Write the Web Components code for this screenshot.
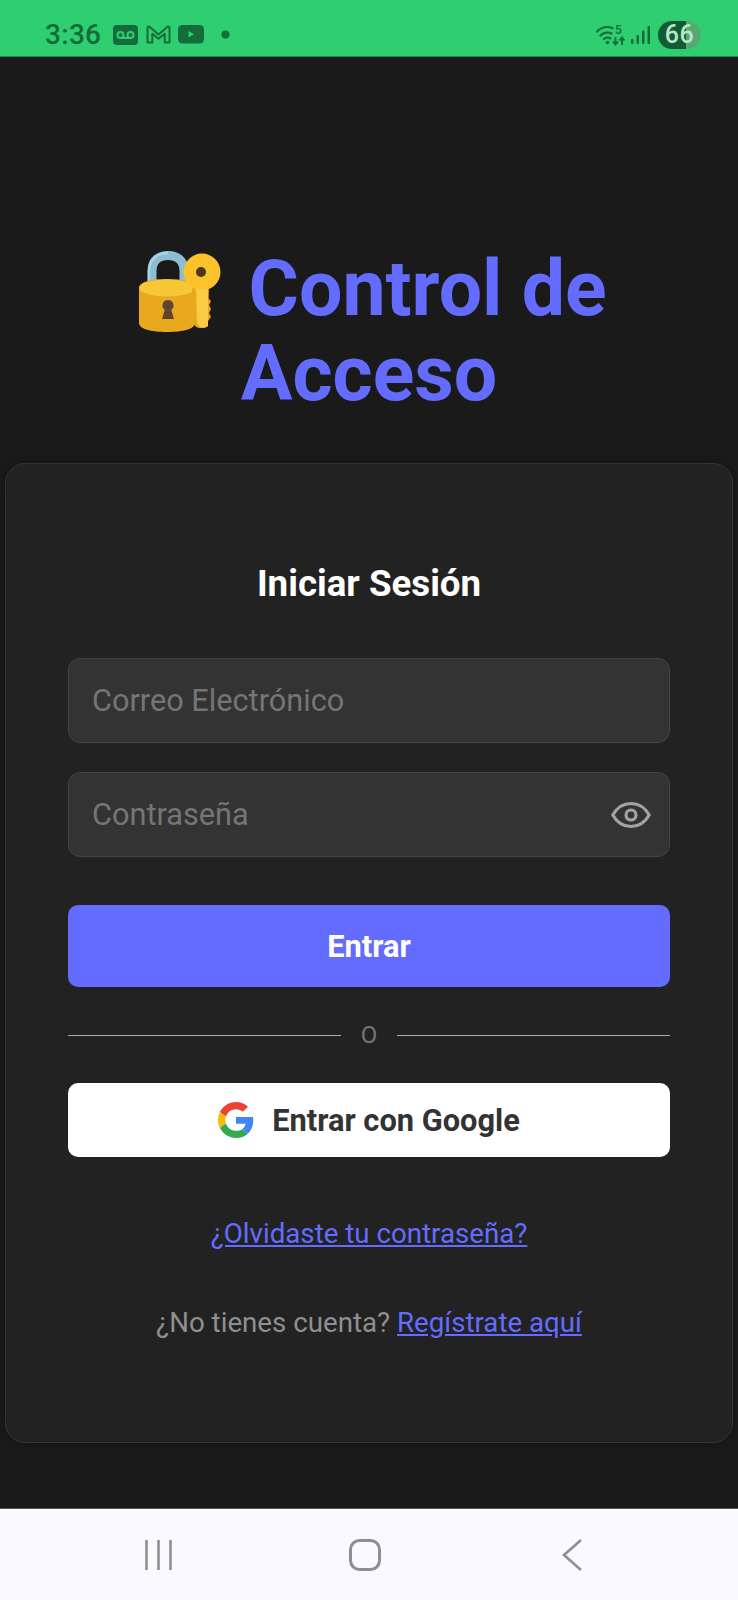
<!DOCTYPE html>
<html lang="es">
<head>
<meta charset="utf-8">
<title>Control de Acceso</title>
<style>
html,body{margin:0;padding:0;background:#1a1a1a;}
body{width:738px;height:1600px;overflow:hidden;font-family:Roboto,"Liberation Sans",sans-serif;}
#app{display:flex;flex-direction:column;height:1600px;}
</style>
</head>
<body>
<div id="app">
  <status-bar></status-bar>
  <login-page>
    <login-field placeholder="Correo Electrónico"></login-field>
    <login-field placeholder="Contraseña" eye></login-field>
  </login-page>
  <nav-bar></nav-bar>
</div>
<script>
class StatusBar extends HTMLElement{
    constructor(){
        super();
        this.attachShadow({ mode: "open" });
        this.shadowRoot.innerHTML = `
        <style>
        :host{display:flex;align-items:center;justify-content:space-between;height:57px;box-sizing:border-box;
            background:#2fce71;border-bottom:1px solid #1e8a4c;padding:13px 37px 0 45px;color:#156b3a;flex:none;}
        .side{display:flex;align-items:center;}
        .time{font:500 28px Roboto,sans-serif;margin-right:12px;letter-spacing:.3px;}
        svg{display:block;}
        .batt{position:relative;width:43px;height:28px;border-radius:14px;background:#55a973;overflow:hidden;margin-left:7px;}
        .batt i{position:absolute;left:0;top:0;bottom:0;width:28px;background:#125c34;}
        .batt b{position:absolute;inset:0;text-align:center;font:500 25px/28px Roboto,sans-serif;color:#b9e6ca;letter-spacing:.5px;}
        </style>
        <div class="side">
            <span class="time">3:36</span>
            <svg width="25" height="20" viewBox="0 0 25 20" style="margin-right:8px"><rect width="25" height="20" rx="4" fill="#156b3a"/><circle cx="7.500" cy="10" r="3" fill="none" stroke="#2fce71" stroke-width="2"/><circle cx="17.500" cy="10" r="3" fill="none" stroke="#2fce71" stroke-width="2"/><path d="M7.500 13h10" stroke="#2fce71" stroke-width="2"/></svg>
            <svg width="25" height="19" viewBox="0 0 25 19" style="margin-right:7px"><path d="M1.500 17.500V3c0-1.300 1.400-1.800 2.300-1l8.700 7.500L21.200 2c.9-.8 2.300-.3 2.300 1v14.500h-4.800V8.800l-6.200 5-6.200-5v8.700z" fill="none" stroke="#156b3a" stroke-width="2" stroke-linejoin="round"/></svg>
            <svg width="26" height="19" viewBox="0 0 26 19" style="margin-right:17px"><rect width="26" height="18.500" rx="4.500" fill="#156b3a"/><path d="M10.500 6v6.500l5.500-3.250z" fill="#2fce71"/></svg>
            <svg width="9" height="9"><circle cx="4.500" cy="4.500" r="4" fill="#156b3a"/></svg>
        </div>
        <div class="side">
            <svg width="30" height="24" viewBox="0 0 30 24"><g fill="none" stroke="#156b3a" stroke-width="2.200" stroke-linecap="round"><path d="M1 8.500C4 5.500 8 4 11.500 4c2 0 3.500.4 5 1.200"/><path d="M4.500 12.500c2-2 4.500-3 7-3 1.500 0 2.800.3 4 1"/><path d="M8 16c1-1 2.200-1.500 3.500-1.500s2 .3 2.800.8"/></g><circle cx="11.500" cy="19.500" r="1.800" fill="#156b3a"/><path d="M19.500 14v7M17 18.500l2.500 3 2.500-3M26 22v-7M23.500 17.500l2.500-3 2.500 3" fill="none" stroke="#156b3a" stroke-width="1.800"/><text x="19" y="10.500" font-family="Roboto" font-size="12" font-weight="500" fill="#156b3a">5</text></svg>
            <svg width="20" height="20" viewBox="0 0 20 20" style="margin-left:5px"><g fill="#156b3a"><rect x="0" y="14" width="2.500" height="5" rx="1"/><rect x="5.500" y="10" width="2.500" height="9" rx="1"/><rect x="11" y="5.500" width="2.500" height="13.500" rx="1"/><rect x="16.500" y="1" width="2.500" height="18" rx="1"/></g></svg>
            <div class="batt"><i></i><b>66</b></div>
        </div>`;
    }
}
window.customElements.define("status-bar", StatusBar);

class LoginField extends HTMLElement{
    constructor(){
        super();
        this.attachShadow({ mode: "open" });
    }
    connectedCallback(){
        let eye = this.hasAttribute("eye") ? `
            <svg width="40" height="30" viewBox="0 0 40 30"><path d="M1.800 15C6 7.500 12.500 3.500 20 3.500S34 7.500 38.200 15C34 22.500 27.500 26.500 20 26.500S6 22.500 1.800 15z" fill="none" stroke="#a3a3a3" stroke-width="3.200" stroke-linejoin="round"/><circle cx="20" cy="15" r="5" fill="none" stroke="#a3a3a3" stroke-width="3.200"/></svg>` : "";
        this.shadowRoot.innerHTML = `
        <style>
        :host{display:flex;align-items:center;justify-content:space-between;height:85px;box-sizing:border-box;
            background:#333;border:1px solid #444;border-radius:12px;padding:0 18px 0 23px;}
        span{font:400 30.700px Roboto,sans-serif;color:#757575;}
        svg{display:block;}
        </style>
        <span>${this.getAttribute("placeholder")}</span>${eye}`;
    }
}
window.customElements.define("login-field", LoginField);

class LoginPage extends HTMLElement{
    constructor(){
        super();
        this.attachShadow({ mode: "open" });
        this.shadowRoot.innerHTML = `
        <style>
        :host{display:flex;flex-direction:column;flex:1;padding:190px 5px 0 5px;box-sizing:border-box;min-height:0;}
        h1{margin:0 0 46px;padding:0 60px;text-align:center;font:700 77px/85px Roboto,sans-serif;color:#646cff;}
        h1 svg{display:inline-block;vertical-align:-14px;width:82px;height:81px;margin:0 8px -3px 8px;}
        .card{background:#222;border:1px solid #343434;border-radius:20px;padding:95px 62px 0;height:980px;box-sizing:border-box;
            box-shadow:0 0 12px rgba(0,0,0,.25);}
        h2{margin:0 0 50px;text-align:center;font:700 36.700px/49px Roboto,sans-serif;color:#fff;}
        .fields{display:flex;flex-direction:column;gap:29px;}
        .btn{display:flex;align-items:center;justify-content:center;border-radius:10px;font:700 30.800px Roboto,sans-serif;}
        .primary{height:82px;margin-top:48px;background:#646cff;color:#fff;}
        .or{display:flex;align-items:center;gap:20px;height:24px;margin:36px 0 36px;color:#757575;font:400 24px Roboto,sans-serif;}
        .or i{flex:1;height:1px;background:#aaa;}
        .google{height:74px;background:#fff;color:#333;gap:18px;}
        .links{display:flex;flex-direction:column;align-items:center;}
        a{color:#646cff;text-decoration:underline;}
        .forgot{font:400 27.700px/36px Roboto,sans-serif;margin-top:59px;}
        .reg{font:400 27.700px/36px Roboto,sans-serif;color:#8f8f8f;margin-top:53px;}
        </style>
        <h1><svg viewBox="0 0 82 81">
            <path d="M13 40V20C13 9 20 4.500 29 4.500S45 9 45 20v20" fill="none" stroke="#8dbdd2" stroke-width="9"/>
            <path d="M10 36V20C10 8 19 2 29 2" fill="none" stroke="#a9d3e4" stroke-width="2.500"/>
            <path d="M0 37c0-6 12-9 28-9s28 3 28 9v35c0 6-12 9-28 9S0 78 0 72z" fill="#e8a91f"/>
            <ellipse cx="28" cy="37" rx="28" ry="8.500" fill="#f7c835"/>
            <path d="M29 49a5.500 5.500 0 0 0-3.300 9.900L23 68h12l-2.700-9.100A5.500 5.500 0 0 0 29 49z" fill="#5f4531"/>
            <path d="M53 34h17l-1 38c0 3-2 5-6 5-6 0-8-2-8-6z" fill="#e8a91f"/>
            <circle cx="63" cy="21" r="18.500" fill="#fcc22c"/>
            <circle cx="62" cy="21" r="5" fill="#4b371c"/>
            <path d="M57 38h12v37c-2 2-7 2-9 0l-2-3z" fill="#fbcb45"/>
            <path d="M69 47l3 3-2 4 2 4-2 4 2 4-3 4z" fill="#e8a91f"/>
        </svg> Control de Acceso</h1>
        <div class="card">
            <h2>Iniciar Sesión</h2>
            <div class="fields"><slot></slot></div>
            <div class="btn primary">Entrar</div>
            <div class="or"><i></i><span>O</span><i></i></div>
            <div class="btn google">
                <svg width="36" height="36" viewBox="0 0 48 48"><path fill="#EA4335" d="M24 9.500c3.540 0 6.710 1.220 9.210 3.600l6.850-6.850C35.900 2.380 30.470 0 24 0 14.620 0 6.510 5.380 2.560 13.220l7.980 6.190C12.430 13.720 17.740 9.500 24 9.500z"/><path fill="#4285F4" d="M46.980 24.550c0-1.570-.15-3.090-.38-4.550H24v9.020h12.940c-.58 2.960-2.260 5.480-4.780 7.180l7.730 6c4.510-4.180 7.090-10.360 7.090-17.650z"/><path fill="#FBBC05" d="M10.530 28.590c-.48-1.450-.76-2.990-.76-4.590s.27-3.140.76-4.590l-7.980-6.190C.92 16.460 0 20.120 0 24c0 3.880.92 7.540 2.560 10.780l7.970-6.190z"/><path fill="#34A853" d="M24 48c6.480 0 11.930-2.130 15.890-5.810l-7.730-6c-2.150 1.450-4.920 2.300-8.160 2.300-6.260 0-11.570-4.220-13.470-9.910l-7.980 6.190C6.510 42.620 14.620 48 24 48z"/></svg>
                <span>Entrar con Google</span>
            </div>
            <div class="links">
                <a class="forgot">¿Olvidaste tu contraseña?</a>
                <div class="reg">¿No tienes cuenta? <a>Regístrate aquí</a></div>
            </div>
        </div>`;
    }
}
window.customElements.define("login-page", LoginPage);

class NavBar extends HTMLElement{
    constructor(){
        super();
        this.attachShadow({ mode: "open" });
        this.shadowRoot.innerHTML = `
        <style>
        :host{display:flex;align-items:center;justify-content:space-between;height:92px;box-sizing:border-box;
            background:#f9f9ff;border-top:1px solid #55555a;padding:0 156px 0 145px;flex:none;}
        svg{display:block;}
        </style>
        <svg width="27" height="32" viewBox="0 0 27 32"><path d="M1.500 1v30M13.500 1v30M25.500 1v30" stroke="#8e8e93" stroke-width="2.600" fill="none"/></svg>
        <svg width="32" height="32" viewBox="0 0 32 32" style="margin-right:4px"><rect x="1.500" y="1.500" width="29" height="29" rx="9" fill="none" stroke="#8e8e93" stroke-width="3"/></svg>
        <svg width="20" height="32" viewBox="0 0 20 32"><path d="M19 1L2 16l17 15" fill="none" stroke="#8e8e93" stroke-width="2.600"/></svg>`;
    }
}
window.customElements.define("nav-bar", NavBar);
</script>
</body>
</html>
